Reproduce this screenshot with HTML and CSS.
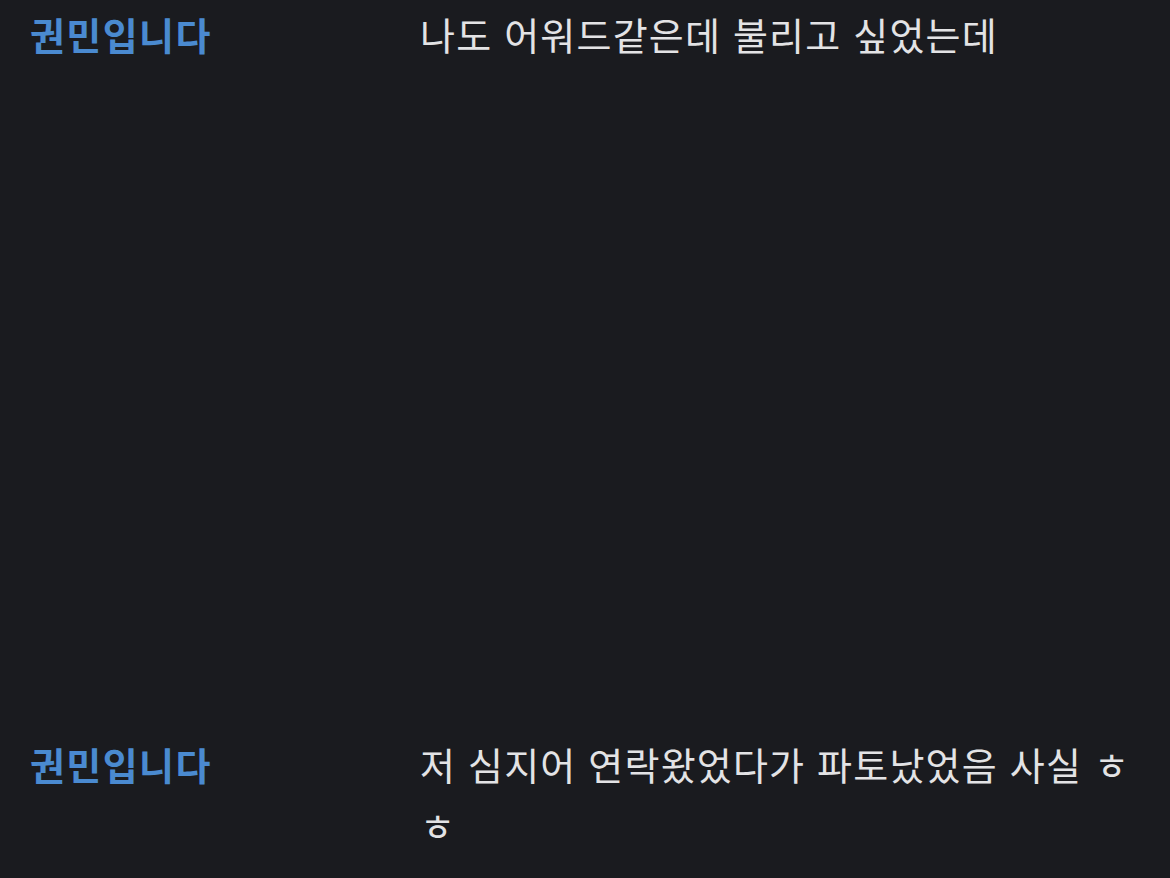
FILE: index.html
```html
<!DOCTYPE html>
<html lang="ko">
<head>
    <meta charset="UTF-8">
    <meta name="viewport" content="width=device-width, initial-scale=1.0">
    <title>댓글</title>
    <link rel="stylesheet" href="styles.css">
</head>
<body>
    <div class="comments">
        <div class="comment first">
            <span class="author">권민입니다</span>
            <p class="message">나도 어워드같은데 불리고 싶었는데</p>
        </div>

        <div class="comment">
            <span class="author">권민입니다</span>
            <p class="message">저 심지어 연락왔었다가 파토났었음 사실 ㅎㅎ</p>
        </div>
    </div>
</body>
</html>
```

FILE: styles.css
```css
* {
    box-sizing: border-box;
}

body {
    margin: 0;
    background-color: #1a1b1f;
    font-family: "Noto Sans CJK KR", "Noto Sans", sans-serif;
}

.comments {
    padding: 3px 30px 0 30px;
}

.comment {
    display: flex;
    align-items: flex-start;
    font-size: 38px;
    line-height: 61px;
}

.comment.first {
    height: 730px;
}

.author {
    width: 390px;
    flex-shrink: 0;
    color: #4a8ad0;
    font-weight: bold;
    letter-spacing: 1.4px;
}

.message {
    margin: 0;
    width: 728px;
    color: #e3e3e5;
    letter-spacing: 1.2px;
}
```
